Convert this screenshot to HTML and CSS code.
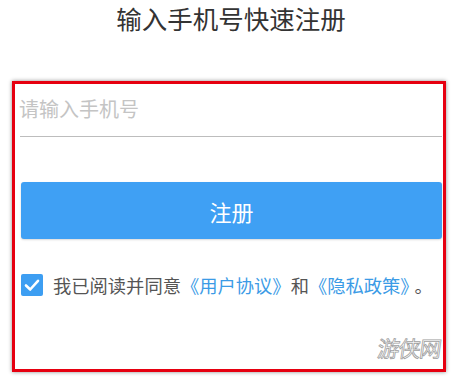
FILE: index.html
```html
<!DOCTYPE html>
<html lang="zh-CN">
<head>
<meta charset="utf-8">
<link rel="stylesheet" href="styles.css">
</head>
<body>
<div class="page">
  <h1 class="title">输入手机号快速注册</h1>
  <div class="frame">
    <div class="field">
      <input class="phone" type="text" placeholder="请输入手机号">
    </div>
    <button class="submit" type="button">注册</button>
    <div class="agree">
      <span class="check">
        <svg width="22" height="22" viewBox="0 0 22 22"><rect x="0" y="0" width="22" height="22" rx="2" fill="#3d9ef2"/><path d="M5 11.5 L9.2 15.5 L17 6.8" fill="none" stroke="#fff" stroke-width="2.6" stroke-linecap="round" stroke-linejoin="round"/></svg>
      </span>
      <span class="agree-text">我已阅读并同意<a class="link">《用户协议》</a>和<a class="link">《隐私政策》</a><span class="stop">。</span></span>
    </div>
    <div class="watermark">游侠网</div>
  </div>
</div>
</body>
</html>
```
FILE: styles.css
```css
* { box-sizing: border-box; }
html, body { margin: 0; padding: 0; background: #fff; }
body {
  font-family: "Noto Sans CJK SC", "Noto Sans", sans-serif;
  width: 459px;
  height: 378px;
  overflow: hidden;
}
.page { padding-top: 3px; }
.title {
  margin: 0 0 0 3px;
  height: 78px;
  font-size: 25.5px;
  font-weight: 400;
  color: #333;
  text-align: center;
  line-height: 30px;
}
.frame {
  position: relative;
  margin-left: 12px;
  width: 434px;
  height: 291px;
  border: 3px solid #e60010;
  box-shadow: 0 0 4px rgba(0,0,0,0.45);
  padding: 0 1px 0 5px;
}
.field {
  height: 53px;
  border-bottom: 1px solid #bdbdbd;
  display: flex;
  align-items: center;
  padding-bottom: 4px;
}
.phone {
  border: 0;
  outline: none;
  width: 100%;
  font-family: inherit;
  font-size: 20px;
  padding: 0;
  margin-left: -1px;
  color: #333;
  background: transparent;
}
.phone::placeholder { color: #c4c4c4; }
.submit {
  display: block;
  margin: 45px 0 0 1px;
  width: 421px;
  height: 57px;
  border: 0;
  border-radius: 3px;
  background: #3fa0f4;
  color: #fff;
  font-family: inherit;
  font-size: 22px;
  box-shadow: 0 1px 2px rgba(0,0,0,0.15);
}
.agree {
  margin: 35px 0 0 1px;
  display: flex;
  align-items: center;
  height: 22px;
}
.check { display: block; width: 22px; height: 22px; }
.check svg { display: block; }
.agree-text {
  margin-left: 10px;
  font-size: 18.3px;
  color: #555;
  white-space: nowrap;
  line-height: 22px;
}
.link { color: #3b9be6; }
.stop { margin-left: 5px; }
.watermark {
  position: absolute;
  right: 2px;
  bottom: 6px;
  font-size: 22px;
  color: #fff;
  -webkit-text-stroke: 0.8px #a0a0a0;
  letter-spacing: -1px;
  transform: skewX(-8deg);
}
```
